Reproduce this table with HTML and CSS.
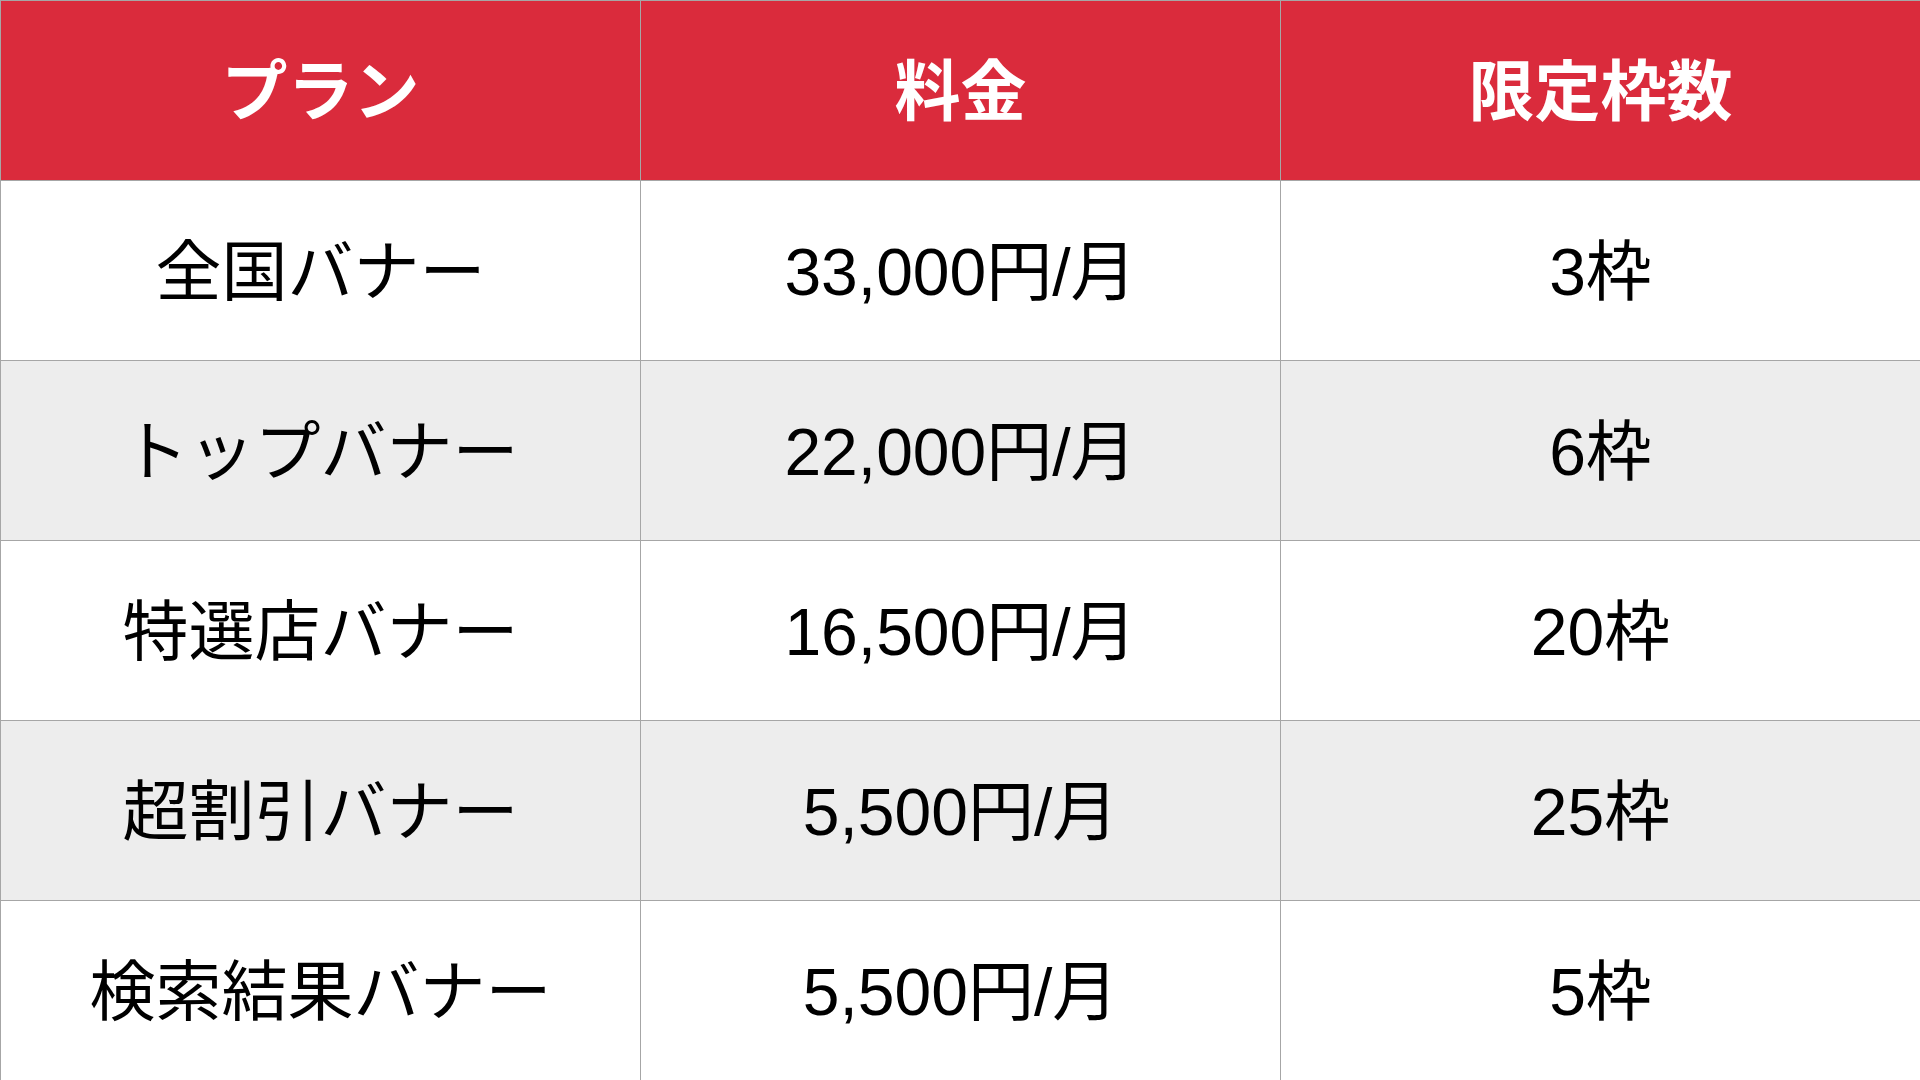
FILE: index.html
```html
<!DOCTYPE html>
<html lang="ja">
<head>
<meta charset="utf-8">
<title>バナープラン</title>
<link rel="stylesheet" href="styles.css">
</head>
<body>
<div class="table">
  <div class="cell head">プラン</div>
  <div class="cell head">料金</div>
  <div class="cell head">限定枠数</div>

  <div class="cell">全国バナー</div>
  <div class="cell">33,000円/月</div>
  <div class="cell">3枠</div>

  <div class="cell alt">トップバナー</div>
  <div class="cell alt">22,000円/月</div>
  <div class="cell alt">6枠</div>

  <div class="cell">特選店バナー</div>
  <div class="cell">16,500円/月</div>
  <div class="cell">20枠</div>

  <div class="cell alt">超割引バナー</div>
  <div class="cell alt">5,500円/月</div>
  <div class="cell alt">25枠</div>

  <div class="cell">検索結果バナー</div>
  <div class="cell">5,500円/月</div>
  <div class="cell">5枠</div>
</div>
</body>
</html>
```
FILE: styles.css
```css
html, body {
  margin: 0;
  padding: 0;
  background: #ffffff;
}

body {
  width: 1920px;
  height: 1080px;
  overflow: hidden;
  font-family: "Liberation Sans", "Noto Sans CJK JP", sans-serif;
}

.table {
  display: grid;
  grid-template-columns: 640px 640px 640px;
  grid-auto-rows: 180px;
  border-top: 1px solid #a6a6a6;
  border-left: 1px solid #a6a6a6;
  box-sizing: border-box;
  width: 1920px;
}

.cell {
  box-sizing: border-box;
  display: flex;
  align-items: center;
  justify-content: center;
  padding-bottom: 10px;
  border-right: 1px solid #a6a6a6;
  border-bottom: 1px solid #a6a6a6;
  font-size: 66px;
  color: #000000;
  background: #ffffff;
  white-space: nowrap;
}

.cell.head {
  background: #da2b3c;
  color: #ffffff;
  font-weight: bold;
}

.cell.alt {
  background: #ededed;
}
```
